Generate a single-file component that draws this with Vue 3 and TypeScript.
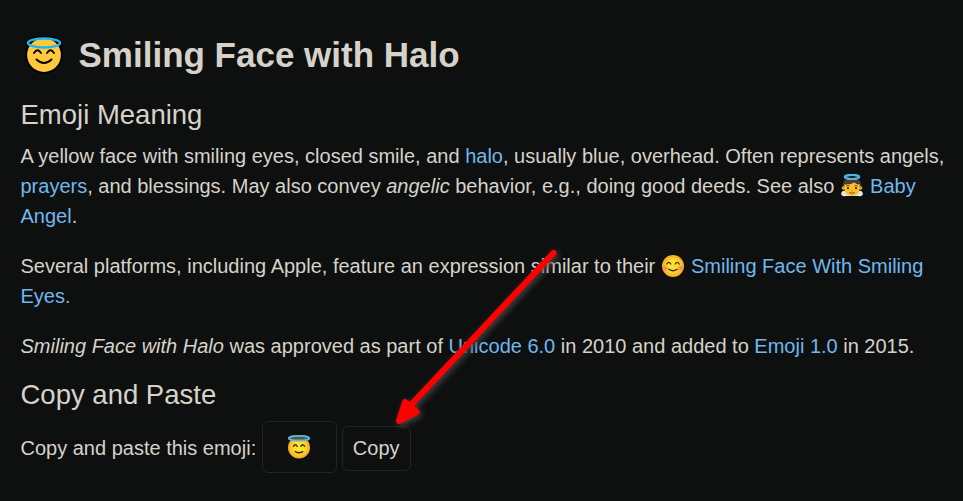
<script setup lang="ts">
import { ref } from 'vue'

const emoji = ref<HTMLElement | null>(null)

function selectEmoji(): void {
  if (emoji.value) window.getSelection()?.selectAllChildren(emoji.value)
}
</script>

<template>
  <main class="page">
    <h1 class="title">
      <svg class="title-icon" viewBox="0 0 40 40">
        <circle cx="20" cy="20" r="18.8" fill="#000" />
        <ellipse cx="20" cy="8.6" rx="19" ry="7.4" fill="#000" />
        <circle cx="20" cy="20" r="16.900" fill="#ffc83d" />
        <ellipse cx="20" cy="8" rx="16" ry="4.400" fill="none" stroke="#20b8ee" stroke-width="2.500" />
        <path d="M10 18q3.500-5.500 7 0M23 18q3.500-5.500 7 0M12.500 24.500q7.500 7 15 0" fill="none" stroke="#000" stroke-width="1.900" stroke-linecap="round" />
      </svg>
      <span>Smiling Face with Halo</span>
    </h1>
    <h2>Emoji Meaning</h2>
    <p>
      A yellow face with smiling eyes, closed smile, and <a>halo</a>, usually blue, overhead. Often represents angels, <a>prayers</a>, and blessings. May also convey <em>angelic</em> behavior, e.g., doing good deeds. See also <a><svg class="icon" viewBox="0 0 24 24">
        <path d="M1 20q1-4 4-3l4 4h6l4-4q3-1 4 3-1 3-5 2H6q-4 1-5-2z" fill="#e3e5e7" />
        <path d="M3 14V10Q3 4.500 12 4.500T21 10V14L19 17H5z" fill="#543930" />
        <circle cx="3.400" cy="14" r="1.800" fill="#e5a52b" /><circle cx="20.600" cy="14" r="1.800" fill="#e5a52b" />
        <path d="M4.300 14V10.500Q10 11 14.500 8.500 16 10.500 19.700 10.500V14Q19 22 12 22T4.300 14z" fill="#fbc02d" />
        <path d="M6.500 12q1.700-1 3 0M14.500 12q1.300-1 3 0" fill="none" stroke="#543930" stroke-width=".9" />
        <circle cx="8" cy="14.200" r="1.100" fill="#403025" /><circle cx="16" cy="14.200" r="1.100" fill="#403025" />
        <path d="M11 16.500h2" stroke="#d98d20" />
        <path d="M9.300 18.500q2.700 1.500 5.400 0" fill="none" stroke="#87502c" stroke-width="1.100" />
        <ellipse cx="12" cy="3" rx="7.200" ry="2" fill="none" stroke="#4fb9e5" stroke-width="2.200" />
      </svg> Baby Angel</a>.
    </p>
    <p>
      Several platforms, including Apple, feature an expression similar to their <a><svg class="icon" viewBox="0 0 24 24">
        <defs>
          <radialGradient id="face"><stop offset=".5" stop-color="#fde030" /><stop offset="1" stop-color="#f4a727" /></radialGradient>
          <radialGradient id="blush"><stop offset="0" stop-color="#ed7770" /><stop offset="1" stop-color="#ed7770" stop-opacity="0" /></radialGradient>
        </defs>
        <circle cx="12" cy="12" r="11" fill="url(#face)" />
        <circle cx="4.500" cy="14" r="3.500" fill="url(#blush)" /><circle cx="19.500" cy="14" r="3.500" fill="url(#blush)" />
        <path d="M5.800 10q2-3.200 4 0M14.200 10q2-3.200 4 0M7.800 15.200q4.200 3 8.400 0" fill="none" stroke="#422b0d" stroke-width="1.400" stroke-linecap="round" />
      </svg> Smiling Face With Smiling Eyes.</a>
    </p>
    <p>
      <em>Smiling Face with Halo</em> was approved as part of <a>Unicode 6.0</a> in 2010 and added to <a>Emoji 1.0</a> in 2015.
    </p>
    <h2>Copy and Paste</h2>
    <div class="copy-row">
      <span class="label">Copy and paste this emoji:</span>
      <span ref="emoji" class="emoji-field">
        <svg class="field-icon" viewBox="0 0 24 24">
          <circle cx="12" cy="12.500" r="11" fill="url(#face)" />
          <ellipse cx="12" cy="3.200" rx="10.300" ry="2.300" fill="#69512a" stroke="#4fb9e5" stroke-width="1.900" />
          <path d="M6.500 11.300q1.800-3 3.600 0M13.900 11.300q1.800-3 3.600 0M8.300 16.600q3.700 2.200 7.400 0" fill="none" stroke="#422b0d" stroke-width="1.400" stroke-linecap="round" />
        </svg>
      </span>
      <button type="button" class="copy" @click="selectEmoji">Copy</button>
    </div>
    <svg class="arrow" viewBox="0 0 180 190">
      <path d="M168.500 13 24 167" stroke="#f00" stroke-width="6.200" stroke-linecap="round" />
      <path d="M14 181 20 162 31.500 172z" fill="#f00" stroke="#f00" stroke-width="6" stroke-linejoin="round" />
    </svg>
  </main>
</template>

<style>
body {
  background: #0e100f;
}
</style>

<style scoped>
.page {
  position: relative;
  box-sizing: border-box;
  height: 501px;
  padding: 34px 15px 0 20.5px;
  overflow: hidden;
  background: #0e100f;
  color: #d6d2ca;
  font: 20px/30px "Liberation Sans", Arial, sans-serif;
}
.title {
  display: flex;
  align-items: center;
  gap: 14.5px;
  height: 42px;
  margin: 0 0 24px;
  padding-left: 3.5px;
  font-size: 35px;
  line-height: 42px;
}
.title-icon {
  width: 40px;
  height: 40px;
}
h2 {
  margin: 0 0 11px;
  font-size: 27.5px;
  font-weight: 400;
  line-height: 30px;
}
p {
  margin: 0 0 20px;
}
p + h2 {
  margin-top: -1px;
}
a {
  color: #71b7ee;
}
.icon {
  width: 24px;
  height: 24px;
  margin-right: 0.6px;
  vertical-align: -5px;
}
.copy-row {
  display: flex;
  align-items: center;
  height: 52px;
}
.label {
  margin: 2px 5.5px 0 0;
}
.emoji-field,
.copy {
  display: flex;
  align-items: center;
  justify-content: center;
  box-sizing: border-box;
  border: 1px solid #232525;
  border-radius: 6px;
}
.emoji-field {
  width: 75px;
  height: 52px;
  margin-right: 5px;
}
.field-icon {
  width: 24px;
  height: 24px;
}
.copy {
  width: 69px;
  height: 45px;
  margin-top: 3px;
  padding: 0 0 2px;
  background: transparent;
  color: inherit;
  font: inherit;
}
.arrow {
  position: absolute;
  left: 385px;
  top: 240px;
  width: 180px;
  height: 190px;
  filter: drop-shadow(2px 2px 3px #484848);
  pointer-events: none;
}
</style>
